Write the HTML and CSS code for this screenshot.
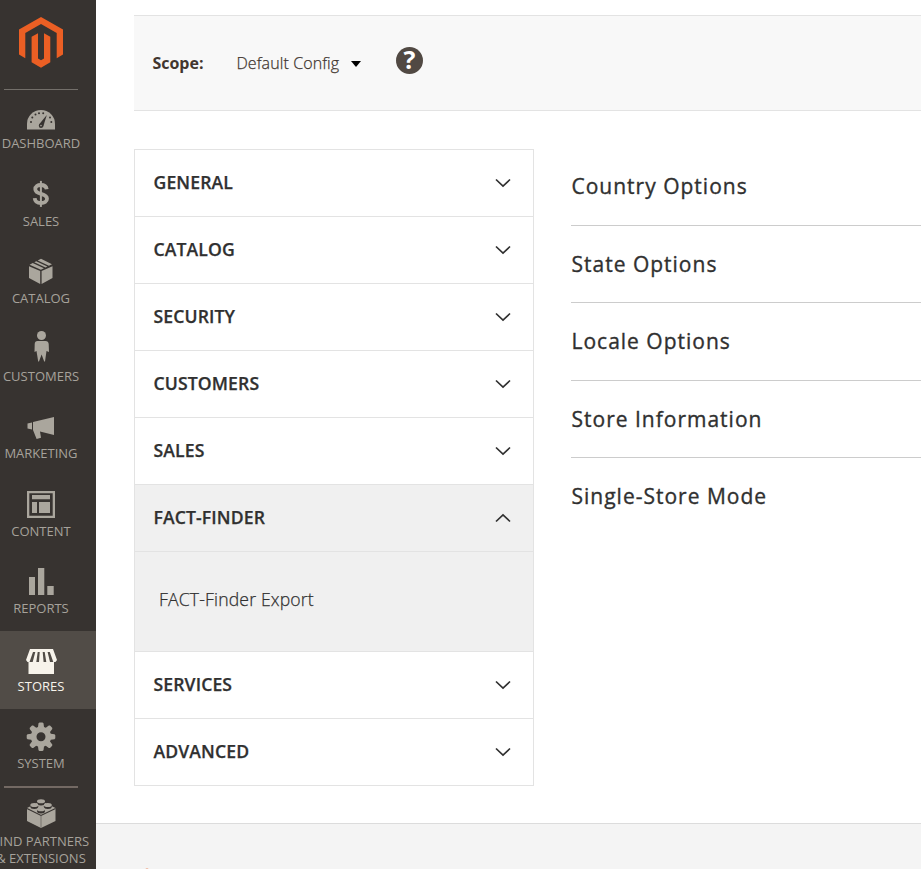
FILE: index.html
```html
<!DOCTYPE html>
<html lang="en">
<head>
<meta charset="utf-8">
<title>Configuration</title>
<link rel="stylesheet" href="styles.css">
</head>
<body>
<div class="app">
  <aside class="sidebar">
    <nav class="menu">
      <a class="logo"><svg width="44" height="51" viewBox="0 0 44 51"><path fill="#eb5f24" d="M22 0 44 12.500V37.500L37.700 41.300V16.100L22 7.100 6.300 16.100V41.300L0 37.500V12.500ZM19 16.300 12.600 19.800V45.200L22 50.700 31.300 45.200V19.800L25 16.300V41.500L22 43.300 19 41.500Z"/></svg></a>
      <a class="item"><svg class="icon" viewBox="0 0 40 34"><path d="M6 27.500V22a14 14 0 0 1 28 0v5.500Z"/><g fill="#373330"><circle cx="20" cy="23.700" r="2.200"/><path d="m18 22.500 7.800-9.600-3.600 11.800Z"/><circle cx="10" cy="20" r="1"/><circle cx="11.300" cy="15.600" r="1"/><circle cx="14.500" cy="12.600" r="1"/><circle cx="18" cy="11.300" r="1"/><circle cx="22.200" cy="11.300" r="1"/><circle cx="29" cy="15.600" r="1"/><circle cx="30.300" cy="20" r="1"/></g><circle cx="20" cy="23.600" r=".8"/></svg><span>DASHBOARD</span></a>
      <a class="item"><svg class="icon" viewBox="0 0 40 34"><g fill="none" stroke="#aaa69d"><path stroke-width="3.800" d="M25.700 9.300C25.300 6.500 23 5 19.800 5 16.600 5 14.300 6.500 14.300 9.200c0 6.200 11.700 3.100 11.700 9.500 0 2.800-2.700 4.300-6 4.300-3.500 0-6-1.600-6.300-4.900"/><path stroke-width="2" d="M19.900.900v26"/></g></svg><span>SALES</span></a>
      <a class="item"><svg class="icon" viewBox="0 0 40 34"><path d="M8 9.200 19.200 14V27L8 21ZM20.600 14 31.500 9.200V21L20.600 27ZM8.600 7.700 11.700 6l11.200 5.200L19.900 12.700ZM13.300 5.200 15.200 4.200 26.400 9.500 24.500 10.500ZM16.700 3.400 20 1.700 31 7.200 27.900 8.800Z"/></svg><span>CATALOG</span></a>
      <a class="item"><svg class="icon" viewBox="0 0 40 34"><circle cx="20.500" cy=".5" r="4.500"/><path d="M16.500 6h8c2 0 3 1 3.200 3l.3 8-2.500-1-1.500 10.500h-.8L20.600 19.500 18 26.500h-.8L15.500 16l-2 1 .2-8c.1-2 1-3 2.800-3Z"/></svg><span>CUSTOMERS</span></a>
      <a class="item"><svg class="icon" viewBox="0 0 40 34"><path d="M6.500 11.500 11 10.500v7L6.500 16.500ZM12 10 33 5V23L19 19.500 20 25.700 15.600 27 12 18Z"/></svg><span>MARKETING</span></a>
      <a class="item"><svg class="icon" viewBox="0 0 40 34"><path fill-rule="evenodd" d="M6 1h28v27H6ZM8.300 3.200v22.600h23.400V3.200Z"/><path d="M11 5h18v4.300H11ZM11 12h5v11h-5ZM18 12h11v11H18Z"/></svg><span>CONTENT</span></a>
      <a class="item"><svg class="icon" viewBox="0 0 40 34"><path d="M8 10h6v18H8ZM17 1h6.300v27H17ZM26.300 19h6.400v9h-6.400Z"/></svg><span>REPORTS</span></a>
      <a class="item active"><svg class="icon" viewBox="0 0 40 34"><path d="M9 4H32L36 15 34.500 17H33V29H7.500V17H6.500L5 15Z"/><g fill="#514c47"><path d="M12 7h2.300l-2.600 10H8.500ZM16.700 7h2l-.7 10h-2.700ZM21.700 7h2l1.600 10h-2.700ZM26.600 7h2.200l3.500 10H29Z"/></g></svg><span>STORES</span></a>
      <a class="item"><svg class="icon" viewBox="0 0 40 34"><g transform="translate(20 14.700)"><path fill-rule="evenodd" d="M-2.500-13.500-1.500-14.300H1.500L2.500-13.500 3-9.800 4.800-9 7.800-11.300 9-11.200 11.200-9 11.300-7.800 9-4.800 9.800-3 13.500-2.500 14.300-1.500V1.500L13.500 2.500 9.800 3 9 4.800 11.300 7.800 11.200 9 9 11.200 7.800 11.300 4.800 9 3 9.800 2.500 13.500 1.500 14.300H-1.500L-2.500 13.500-3 9.800-4.800 9-7.800 11.300-9 11.200-11.200 9-11.300 7.800-9 4.800-9.800 3-13.500 2.500-14.300 1.500V-1.500L-13.500-2.500-9.800-3-9-4.800-11.300-7.800-11.200-9-9-11.200-7.800-11.300-4.800-9-3-9.800ZM0-4.500A4.500 4.500 0 1 0 0 4.500 4.500 4.500 0 1 0 0-4.500Z"/></g></svg><span>SYSTEM</span></a>
      <a class="item partners"><svg class="icon" viewBox="0 0 40 34"><path d="M6 8 20 1 34.500 8V21L20 28 6 21Z"/><path fill="none" stroke="#373330" stroke-width="1.100" d="M6 8.600 20 15.500 34.500 8.600"/><path fill="none" stroke="#77726c" stroke-width="1" d="M20 16v12"/><g fill="#373330"><ellipse cx="20" cy="3" rx="4" ry="2.500"/><ellipse cx="13.300" cy="6.500" rx="4" ry="2.500"/><ellipse cx="26.800" cy="6.500" rx="4" ry="2.500"/><ellipse cx="20" cy="11" rx="4" ry="2.500"/></g><ellipse cx="20" cy="1.300" rx="4" ry="2"/><ellipse cx="13.300" cy="5" rx="4" ry="2"/><ellipse cx="26.800" cy="5" rx="4" ry="2"/><ellipse cx="20" cy="9.300" rx="4" ry="2"/></svg><span>FIND PARTNERS<br>&amp; EXTENSIONS</span></a>
    </nav>
  </aside>
  <div class="page">
    <main class="main">
      <section class="scope">
        <strong>Scope:</strong>
        <span class="store">Default Config</span>
        <svg class="caret" width="10" height="6" viewBox="0 0 10 6"><path d="M0 0h10L5 6Z"/></svg>
        <span class="help">?</span>
      </section>
      <div class="columns">
        <ul class="tabs">
          <li class="tab">GENERAL<svg class="chevron" viewBox="0 0 16 10"><path d="m1 1.500 7 6.500 7-6.500"/></svg></li>
          <li class="tab">CATALOG<svg class="chevron" viewBox="0 0 16 10"><path d="m1 1.500 7 6.500 7-6.500"/></svg></li>
          <li class="tab">SECURITY<svg class="chevron" viewBox="0 0 16 10"><path d="m1 1.500 7 6.500 7-6.500"/></svg></li>
          <li class="tab">CUSTOMERS<svg class="chevron" viewBox="0 0 16 10"><path d="m1 1.500 7 6.500 7-6.500"/></svg></li>
          <li class="tab">SALES<svg class="chevron" viewBox="0 0 16 10"><path d="m1 1.500 7 6.500 7-6.500"/></svg></li>
          <li class="tab open">FACT-FINDER<svg class="chevron" viewBox="0 0 16 10"><path d="m1 8.500 7-6.500 7 6.500"/></svg></li>
          <li class="sub">FACT-Finder Export</li>
          <li class="tab">SERVICES<svg class="chevron" viewBox="0 0 16 10"><path d="m1 1.500 7 6.500 7-6.500"/></svg></li>
          <li class="tab">ADVANCED<svg class="chevron" viewBox="0 0 16 10"><path d="m1 1.500 7 6.500 7-6.500"/></svg></li>
        </ul>
        <div class="sections">
          <h2>Country Options</h2>
          <h2>State Options</h2>
          <h2>Locale Options</h2>
          <h2>Store Information</h2>
          <h2>Single-Store Mode</h2>
        </div>
      </div>
    </main>
    <footer class="footer"><svg width="26" height="30" viewBox="0 0 44 51"><path fill="#eb5f24" d="M22 0 44 12.500V37.500L37.700 41.300V16.100L22 7.100 6.300 16.100V41.300L0 37.500V12.500Z"/></svg></footer>
  </div>
</div>
</body>
</html>
```
FILE: styles.css
```css
* { box-sizing: border-box; }
body { margin: 0; background: #fff; color: #303030; font-family: "Open Sans", "Noto Sans", sans-serif; }
.app { display: flex; height: 869px; overflow: hidden; }

.sidebar { flex: none; width: 96px; background: #373330; overflow: hidden; }
.menu { width: 110px; margin-left: -14px; display: flex; flex-direction: column; }
.logo { height: 88px; padding: 17px 0 0 33px; }
.logo svg { display: block; }
.item { flex: none; height: 77px; padding-top: 14px; display: flex; flex-direction: column; align-items: center; color: #a6a29b; font-size: 13px; line-height: 14px; text-align: center; white-space: nowrap; }
.item:nth-child(even) { height: 78px; }
.item:nth-child(2) { background: linear-gradient(#736f6a, #736f6a) 18px 1px / 74px 1px no-repeat; }
.icon { display: block; flex: none; width: 40px; height: 34px; overflow: visible; fill: #aaa69d; }
.item.active { height: 78px; margin-bottom: -1px; background: #514c47; color: #f7f3eb; }
.active .icon { fill: #f7f3eb; }
.item.partners { height: 90px; line-height: 17px; background: linear-gradient(#736963, #736963) 18px 0 / 74px 2px no-repeat; }
.partners span { margin-top: -1px; }

.page { flex: 1; min-width: 0; display: flex; flex-direction: column; }
.main { height: 823px; padding: 15px 0 0 38px; }
.scope { height: 96px; display: flex; align-items: center; padding-left: 18.400px; background: #f8f8f8; border: solid #e3e3e3; border-width: 1px 0; font-size: 16px; }
.scope strong { width: 84px; font-weight: 700; color: #41362f; }
.store { width: 103px; color: #41362f; font-weight: 300; letter-spacing: .1px; -webkit-text-stroke: .25px #41362f; white-space: nowrap; }
.caret { margin: 2px 0 0 11.600px; }
.help { width: 27px; height: 27px; margin: -5px 0 0 35px; border-radius: 50%; background: #514943; color: #fff; font-size: 25px; font-weight: 700; line-height: 25px; text-align: center; }
.columns { display: flex; margin-top: 38px; }
.tabs { width: 400px; margin: 0; padding: 0; list-style: none; border: 1px solid #e3e3e3; }
.tab { height: 67px; padding: 0 22.500px 2px 18.500px; display: flex; align-items: center; justify-content: space-between; border-bottom: 1px solid #e3e3e3; font-size: 17.600px; font-weight: 600; letter-spacing: .12px; -webkit-text-stroke: .25px #303030; }
.tab:last-child { height: 66px; padding-bottom: 2px; border-bottom: 0; }
.chevron { width: 16px; height: 10px; margin-top: 2px; fill: none; stroke: #303030; stroke-width: 1.700; }
.open, .sub { background: #f0f0f0; }
.sub { height: 100px; padding: 0 24px 5px; display: flex; align-items: center; border-bottom: 1px solid #e3e3e3; font-size: 17.600px; font-weight: 300; letter-spacing: .16px; -webkit-text-stroke: .25px #303030; }
.sections { flex: 1; margin: -1px 0 0 37px; }
.sections h2 { height: 77.500px; margin: 0; padding: 0 0 0 .5px; display: flex; align-items: center; border-bottom: 1px solid #ccc; font-size: 21px; font-weight: 400; letter-spacing: 1px; -webkit-text-stroke: .35px #303030; }
.sections h2:last-child { border: 0; padding-bottom: 1px; }
.footer { flex: 1; padding: 44px 38px 0; background: #f4f4f4; border-top: 1px solid #dcdcdc; overflow: hidden; }
.footer svg { display: block; opacity: .45; }
```
